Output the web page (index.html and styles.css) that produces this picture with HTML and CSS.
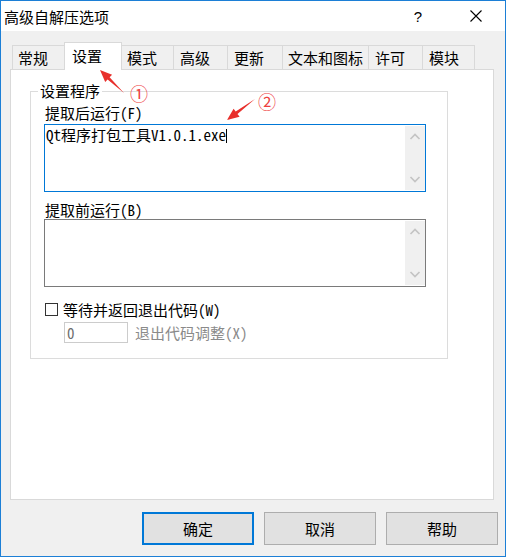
FILE: index.html
```html
<!DOCTYPE html>
<html lang="zh">
<head>
<meta charset="utf-8">
<title>高级自解压选项</title>
<link rel="stylesheet" href="styles.css">
</head>
<body>
<div class="screen">
  <div class="window">
    <div class="titlebar">
      <div class="title">高级自解压选项</div>
      <div class="cap-btn help">?</div>
      <div class="cap-btn close">
        <svg width="12" height="12" viewBox="0 0 12 12"><path d="M0.5 0.5 L11.5 11.5 M11.5 0.5 L0.5 11.5" stroke="#000" stroke-width="1.1" fill="none"/></svg>
      </div>
    </div>
    <div class="body">
      <div class="tabs">
        <div class="tab t1">常规</div>
        <div class="tab t2 active">设置</div>
        <div class="tab t3">模式</div>
        <div class="tab t4">高级</div>
        <div class="tab t5">更新</div>
        <div class="tab t6">文本和图标</div>
        <div class="tab t7">许可</div>
        <div class="tab t8">模块</div>
      </div>
      <div class="panel">
        <fieldset class="group">
          <legend class="sim">设置程序</legend>
          <div class="label sim">提取后运行(F)</div>
          <div class="memo focused">
            <div class="memo-text sim">Qt程序打包工具V1.0.1.exe<span class="caret"></span></div>
            <div class="vscroll">
              <div class="arrow"><svg width="20" height="20" viewBox="0 0 20 20"><path d="M5.5 13 L10 8.5 L14.5 13" stroke="#c4c4c4" stroke-width="1.7" fill="none"/></svg></div>
              <div class="arrow"><svg width="20" height="20" viewBox="0 0 20 20"><path d="M5.5 7 L10 11.5 L14.5 7" stroke="#c4c4c4" stroke-width="1.7" fill="none"/></svg></div>
            </div>
          </div>
          <div class="label sim second">提取前运行(B)</div>
          <div class="memo">
            <div class="memo-text sim"></div>
            <div class="vscroll">
              <div class="arrow"><svg width="20" height="20" viewBox="0 0 20 20"><path d="M5.5 13 L10 8.5 L14.5 13" stroke="#c4c4c4" stroke-width="1.7" fill="none"/></svg></div>
              <div class="arrow"><svg width="20" height="20" viewBox="0 0 20 20"><path d="M5.5 7 L10 11.5 L14.5 7" stroke="#c4c4c4" stroke-width="1.7" fill="none"/></svg></div>
            </div>
          </div>
          <div class="check-row">
            <span class="checkbox"></span>
            <span class="sim">等待并返回退出代码(W)</span>
          </div>
          <div class="exit-row">
            <div class="small-input sim">0</div>
            <span class="dim sim">退出代码调整(X)</span>
          </div>
        </fieldset>
      </div>
      <div class="buttons">
        <div class="btn default">确定</div>
        <div class="btn">取消</div>
        <div class="btn">帮助</div>
      </div>
    </div>
  </div>
  <svg class="annot" width="506" height="557" viewBox="0 0 506 557">
    <polygon points="124,93 109.6,77.2 112.1,74.7 100,70 105.2,81.9 107.6,79.4" fill="#e8302c"/>
    <polygon points="255,99 235.7,111.6 233.6,108.8 227,120 239.6,116.8 237.5,114" fill="#e8302c"/>
    <text x="139" y="93" class="circ">①</text>
    <text x="267" y="101" class="circ">②</text>
  </svg>
</div>
</body>
</html>
```

FILE: styles.css
```css
body {
  margin: 0;
  background: #ffffff;
}

.screen {
  position: relative;
  width: 506px;
  height: 557px;
}

.window {
  box-sizing: border-box;
  width: 506px;
  height: 557px;
  border: 1px solid #1c7fd6;
  background: #f0f0f0;
  display: flex;
  flex-direction: column;
  font-family: "Noto Sans CJK SC", sans-serif;
  font-size: 15px;
  color: #000;
}

.sim {
  font-family: "Noto Sans Mono CJK SC", "Noto Sans CJK SC", "Liberation Mono", monospace;
  font-size: 15px;
}

/* title bar */
.titlebar {
  height: 30px;
  background: #fff;
  display: flex;
  align-items: center;
}

.title {
  flex: 1;
  padding-left: 3px;
  padding-top: 2px;
  line-height: 20px;
}

.cap-btn {
  width: 58px;
  height: 30px;
  display: flex;
  align-items: center;
  justify-content: center;
}

.help {
  font-family: "Liberation Sans", sans-serif;
  font-size: 15px;
  padding-top: 1px;
  box-sizing: border-box;
}

/* body */
.body {
  flex: 1;
  padding: 11px 7px 0 9px;
  display: flex;
  flex-direction: column;
}

.tabs {
  display: flex;
  align-items: flex-end;
  height: 27px;
  padding-left: 2px;
}

.tab {
  box-sizing: border-box;
  height: 24px;
  border: 1px solid #d9d9d9;
  border-bottom: none;
  margin-left: -1px;
  padding-left: 5px;
  line-height: 23px;
  background: #f0f0f0;
  white-space: nowrap;
}

.tab:first-child { margin-left: 0; }
.t1 { width: 53px; }
.t2 { width: 58px; }
.t3 { width: 53px; }
.t4 { width: 55px; padding-left: 6px; }
.t5 { width: 56px; padding-left: 6px; }
.t6 { width: 87px; }
.t7 { width: 55px; padding-left: 6px; }
.t8 { width: 53px; padding-left: 6px; }

.tab.active {
  height: 28px;
  margin-bottom: -1px;
  background: #fff;
  position: relative;
  z-index: 1;
  padding-left: 7px;
  line-height: 25px;
}

.panel {
  box-sizing: border-box;
  width: 484px;
  height: 431px;
  border: 1px solid #d9d9d9;
  background: #fff;
  padding: 12px 0 0 19px;
}

.group {
  box-sizing: border-box;
  width: 418px;
  margin: 0;
  padding: 4px 20px 15px 13px;
  border: 1px solid #dcdcdc;
}

.group legend {
  padding: 0 2px;
  margin-left: -6px;
  line-height: 18px;
}

.label {
  line-height: 17px;
  padding-left: 1px;
  margin-bottom: 3px;
}

.label.second {
  margin-top: 9px;
  margin-bottom: 1px;
}

.memo {
  box-sizing: border-box;
  width: 382px;
  height: 68px;
  border: 1px solid #7a7a7a;
  display: flex;
  background: #fff;
}

.memo.focused {
  border-color: #0078d7;
}

.memo-text {
  flex: 1;
  padding: 1px 1px;
  line-height: 17px;
  white-space: nowrap;
}

.caret {
  display: inline-block;
  width: 1px;
  height: 14px;
  background: #000;
  vertical-align: -2px;
}

.vscroll {
  width: 20px;
  margin: 1px 0;
  background: #f0f0f0;
  display: flex;
  flex-direction: column;
  justify-content: space-between;
}

.arrow {
  width: 20px;
  height: 20px;
}

.arrow svg { display: block; }

.check-row {
  display: flex;
  align-items: center;
  height: 17px;
  margin-top: 14px;
  line-height: 17px;
}

.checkbox {
  box-sizing: border-box;
  width: 13px;
  height: 13px;
  border: 1px solid #333;
  background: #fff;
  margin-left: 1px;
  margin-right: 5px;
}

.exit-row {
  display: flex;
  align-items: center;
  margin-top: 4px;
}

.small-input {
  box-sizing: border-box;
  width: 64px;
  height: 21px;
  border: 1px solid #cccccc;
  margin-left: 20px;
  padding-left: 2px;
  line-height: 19px;
  color: #6d6d6d;
}

.dim {
  color: #8a8a8a;
  margin-left: 7px;
  line-height: 17px;
}

/* buttons */
.buttons {
  display: flex;
  justify-content: flex-end;
  gap: 10px;
  margin-top: 12px;
}

.btn {
  box-sizing: border-box;
  width: 112px;
  height: 33px;
  border: 1px solid #adadad;
  background: #e1e1e1;
  display: flex;
  align-items: center;
  justify-content: center;
  line-height: 20px;
}

.btn.default {
  border: 2px solid #0078d7;
}

/* annotations */
.annot {
  position: absolute;
  left: 0;
  top: 0;
  pointer-events: none;
}

.circ {
  font-family: "Noto Sans CJK SC", sans-serif;
  font-size: 18px;
  fill: #ee4040;
  text-anchor: middle;
  dominant-baseline: central;
}
```
